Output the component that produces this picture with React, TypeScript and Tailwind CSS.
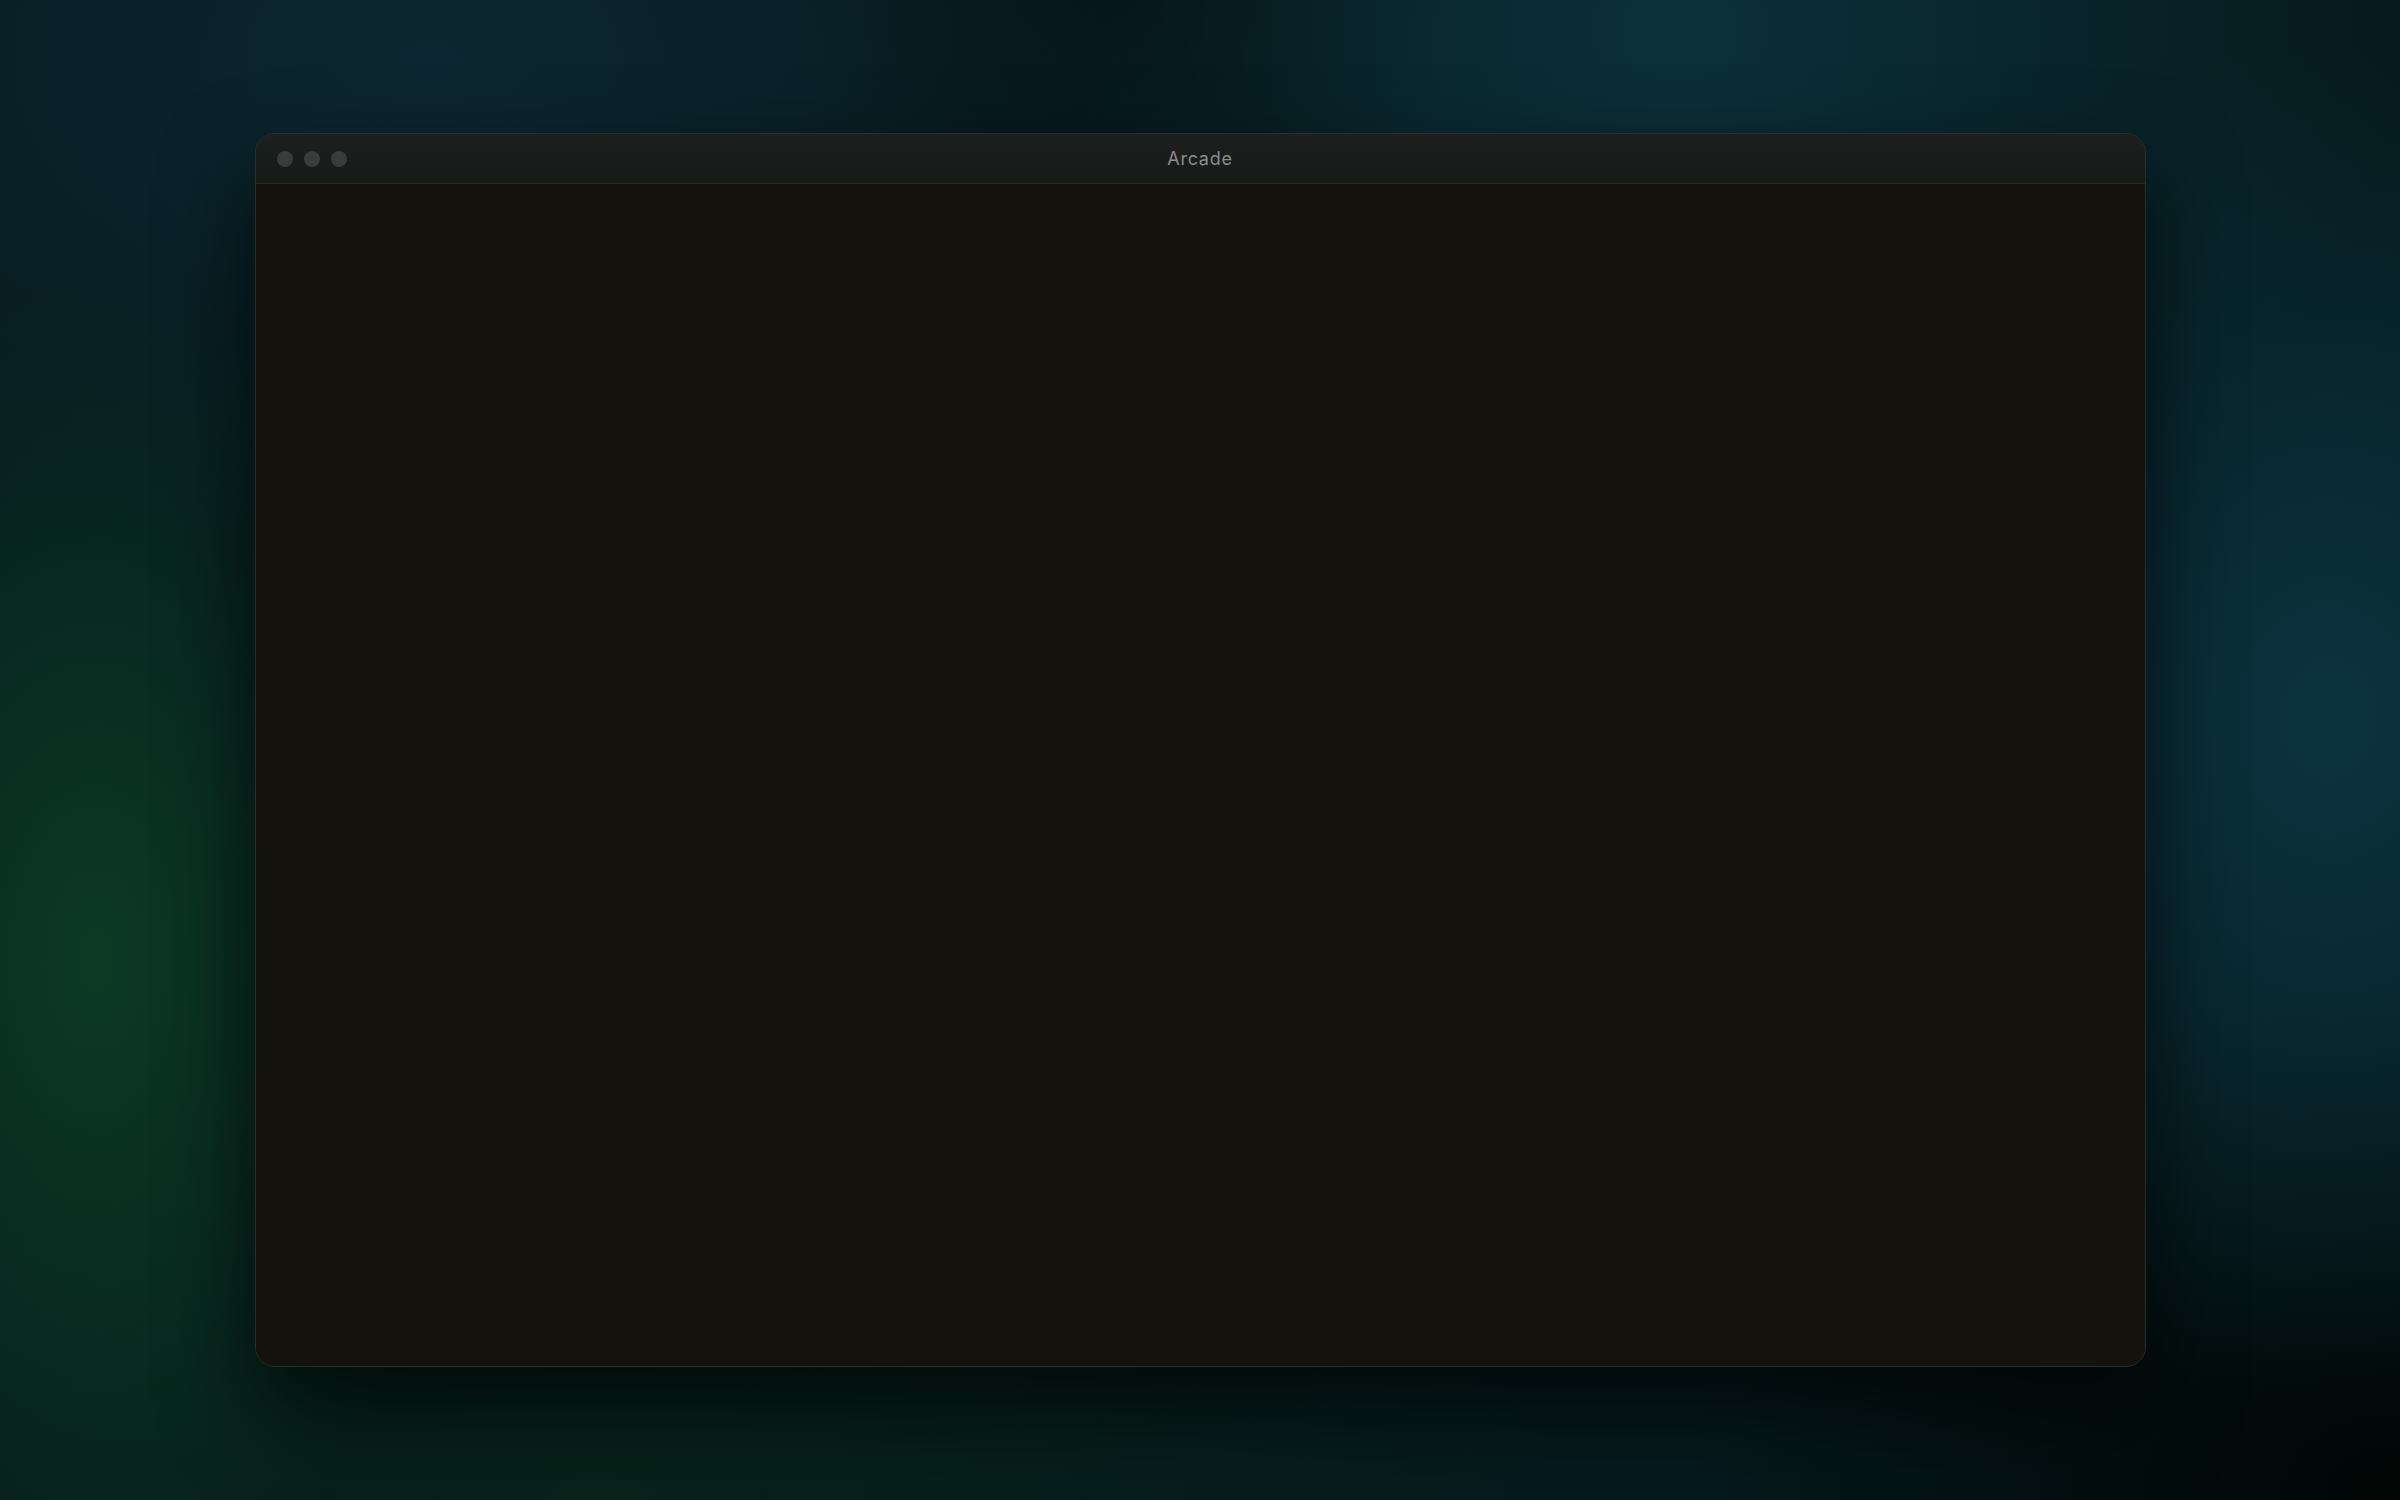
import React from 'react';

// Traffic-light dots in the title bar (window is inactive, so they're all grey)
function WindowDots() {
  return (
    <div className="flex items-center gap-[11px]">
      <span className="w-4 h-4 rounded-full bg-[#3a3b3b]" />
      <span className="w-4 h-4 rounded-full bg-[#3a3b3b]" />
      <span className="w-4 h-4 rounded-full bg-[#3a3b3b]" />
    </div>
  );
}

export default function App() {
  return (
    <div
      className="h-screen w-full flex items-center justify-center bg-[#061a1d] bg-[radial-gradient(ellipse_30%_40%_at_70%_2%,#0c313a_0%,transparent_100%),radial-gradient(ellipse_22%_45%_at_97%_48%,#0b3440_0%,transparent_100%),radial-gradient(ellipse_16%_45%_at_4%_64%,#0c3b25_0%,transparent_100%),radial-gradient(ellipse_35%_35%_at_18%_4%,#0c2731_0%,transparent_100%),radial-gradient(ellipse_14%_22%_at_47%_0%,#030a0b_0%,transparent_100%),radial-gradient(ellipse_30%_35%_at_100%_100%,#010504_0%,transparent_100%),radial-gradient(ellipse_40%_30%_at_25%_100%,#07231a_0%,transparent_100%)]"
      style={{ fontFamily: 'Inter, "Liberation Sans", sans-serif' }}
    >
      <div className="w-[1891px] h-[1234px] flex flex-col rounded-[20px] overflow-hidden border border-[#26302f] bg-[#14120d] shadow-[0_40px_90px_rgba(0,0,0,0.65)]">
        {/* title bar */}
        <div className="relative h-[50px] shrink-0 flex items-center px-[21px] bg-gradient-to-b from-[#1d1e1e] to-[#181919] border-b border-[#2b2e2d]">
          <WindowDots />
          <div className="absolute inset-0 flex items-center justify-center pointer-events-none">
            <span className="text-[18px] text-[#8c8c8a] tracking-[0.04em]">Arcade</span>
          </div>
        </div>
        {/* empty content area */}
        <div className="flex-1 bg-[#14120d]" />
      </div>
    </div>
  );
}
